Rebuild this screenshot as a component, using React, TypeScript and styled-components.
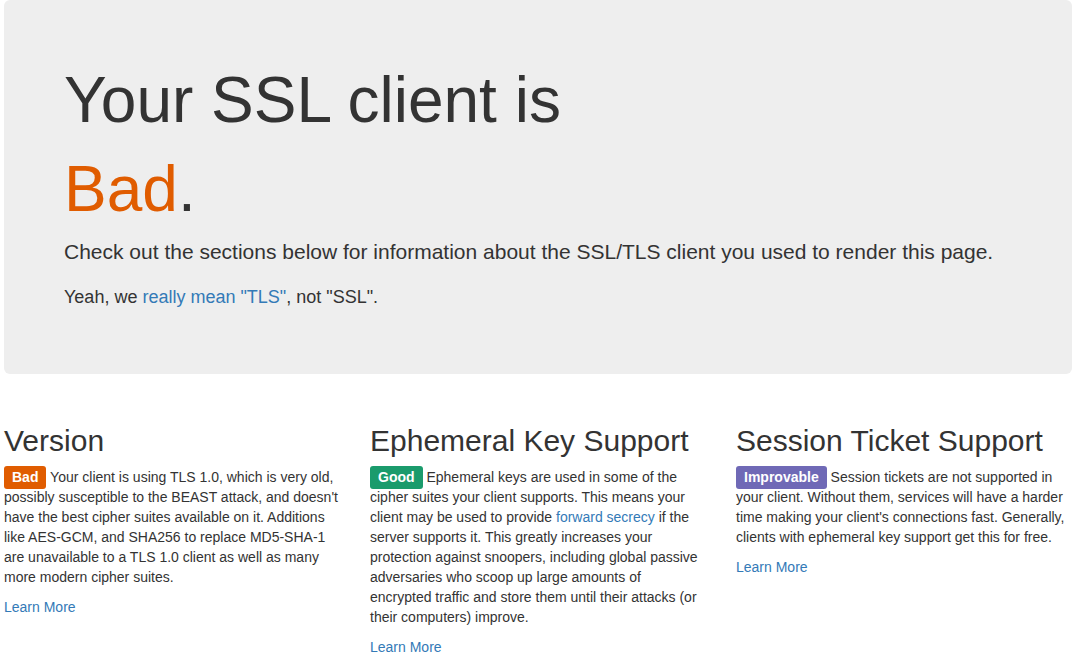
import React from 'react';
import styled, { createGlobalStyle } from 'styled-components';

const GlobalStyle = createGlobalStyle`
  html, body {
    margin: 0;
    padding: 0;
    background: #fff;
  }
  body {
    font-family: "Liberation Sans", Arial, Helvetica, sans-serif;
    font-size: 14px;
    line-height: 20px;
    color: #333;
  }
  a {
    color: #337ab7;
    text-decoration: none;
  }
`;

const Page = styled.div`
  width: 1068px;
  margin-left: 4px;
`;

const Jumbotron = styled.header`
  background: #eee;
  border-radius: 6px;
  padding: 48px 60px;
  margin-bottom: 30px;
`;

const Title = styled.h1`
  margin: 8px 0 0;
  font-size: 64px;
  line-height: 89px;
  font-weight: 500;
  color: #333;
`;

const Rating = styled.span<{ $tone: string }>`
  color: ${p => p.$tone};
`;

const Lead = styled.p`
  margin: 3px 0 17px;
  font-size: 21px;
  line-height: 30px;
`;

const Aside = styled.p`
  margin: 0 0 15px;
  font-size: 18px;
  line-height: 27px;
`;

const Sections = styled.div`
  display: grid;
  grid-template-columns: repeat(3, 336px);
  column-gap: 30px;
`;

const Section = styled.section`
  & h2 {
    margin: 20px 0 10px;
    font-size: 30px;
    line-height: 33px;
    font-weight: 500;
  }
  & p {
    margin: 0 0 10px;
  }
`;

const tones = {
  bad: '#e05c00',
  good: '#1a9b6c',
  improvable: '#6f69b6',
};

type Tone = keyof typeof tones;

const Badge = styled.span<{ $tone: Tone }>`
  display: inline;
  padding: 3px 8px 4px;
  border-radius: 3px;
  background: ${p => tones[p.$tone]};
  color: #fff;
  font-weight: bold;
  font-size: 14px;
`;

const sections: {
  title: string;
  tone: Tone;
  label: string;
  body: React.ReactNode;
}[] = [
  {
    title: 'Version',
    tone: 'bad',
    label: 'Bad',
    body: (
      <>
        Your client is using TLS 1.0, which is very old, possibly susceptible
        to the BEAST attack, and doesn't have the best cipher suites available
        on it. Additions like AES-GCM, and SHA256 to replace MD5-SHA-1 are
        unavailable to a TLS 1.0 client as well as many more modern cipher
        suites.
      </>
    ),
  },
  {
    title: 'Ephemeral Key Support',
    tone: 'good',
    label: 'Good',
    body: (
      <>
        Ephemeral keys are used in some of the cipher suites your client
        supports. This means your client may be used to provide{' '}
        <a href="#">forward secrecy</a> if the server supports it. This greatly
        increases your protection against snoopers, including global passive
        adversaries who scoop up large amounts of encrypted traffic and store
        them until their attacks (or their computers) improve.
      </>
    ),
  },
  {
    title: 'Session Ticket Support',
    tone: 'improvable',
    label: 'Improvable',
    body: (
      <>
        Session tickets are not supported in your client. Without them,
        services will have a harder time making your client's connections
        fast. Generally, clients with ephemeral key support get this for free.
      </>
    ),
  },
];

export default function App() {
  return (
    <Page>
      <GlobalStyle />
      <Jumbotron>
        <Title>
          Your SSL client is
          <br />
          <Rating $tone={tones.bad}>Bad</Rating>.
        </Title>
        <Lead>
          Check out the sections below for information about the SSL/TLS client
          you used to render this page.
        </Lead>
        <Aside>
          Yeah, we <a href="#">really mean "TLS"</a>, not "SSL".
        </Aside>
      </Jumbotron>
      <Sections>
        {sections.map(s => (
          <Section key={s.title}>
            <h2>{s.title}</h2>
            <p>
              <Badge $tone={s.tone}>{s.label}</Badge> {s.body}
            </p>
            <p>
              <a href="#">Learn More</a>
            </p>
          </Section>
        ))}
      </Sections>
    </Page>
  );
}
